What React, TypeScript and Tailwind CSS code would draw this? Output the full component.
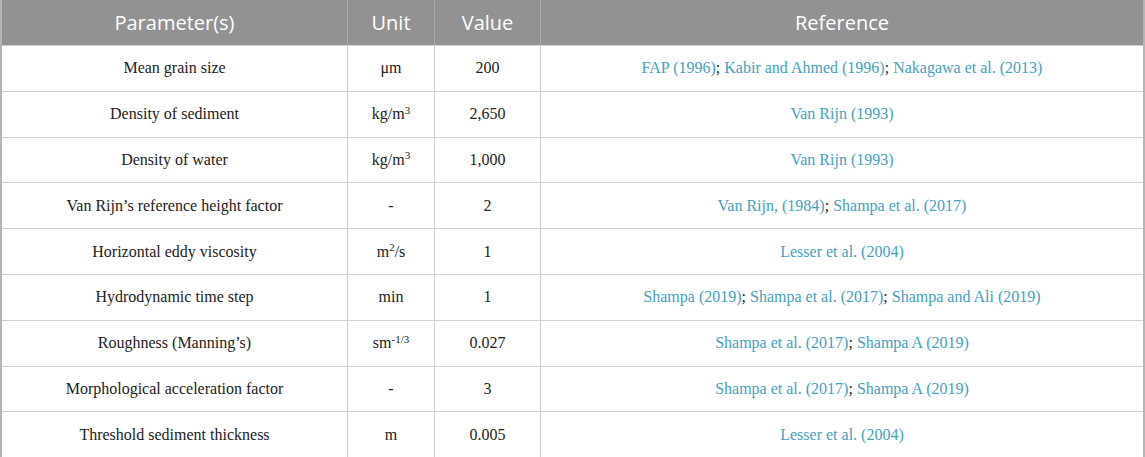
const rows: { param: string; unit: React.ReactNode; value: string; refs: string[] }[] = [
  { param: 'Mean grain size', unit: 'μm', value: '200', refs: ['FAP (1996)', 'Kabir and Ahmed (1996)', 'Nakagawa et al. (2013)'] },
  { param: 'Density of sediment', unit: <>kg/m<sup className="text-[11px]">3</sup></>, value: '2,650', refs: ['Van Rijn (1993)'] },
  { param: 'Density of water', unit: <>kg/m<sup className="text-[11px]">3</sup></>, value: '1,000', refs: ['Van Rijn (1993)'] },
  { param: 'Van Rijn’s reference height factor', unit: '-', value: '2', refs: ['Van Rijn, (1984)', 'Shampa et al. (2017)'] },
  { param: 'Horizontal eddy viscosity', unit: <>m<sup className="text-[11px]">2</sup>/s</>, value: '1', refs: ['Lesser et al. (2004)'] },
  { param: 'Hydrodynamic time step', unit: 'min', value: '1', refs: ['Shampa (2019)', 'Shampa et al. (2017)', 'Shampa and Ali (2019)'] },
  { param: 'Roughness (Manning’s)', unit: <>sm<sup className="text-[11px]">-1/3</sup></>, value: '0.027', refs: ['Shampa et al. (2017)', 'Shampa A (2019)'] },
  { param: 'Morphological acceleration factor', unit: '-', value: '3', refs: ['Shampa et al. (2017)', 'Shampa A (2019)'] },
  { param: 'Threshold sediment thickness', unit: 'm', value: '0.005', refs: ['Lesser et al. (2004)'] },
];

const headCell = 'flex items-center justify-center h-[45px] text-white text-[20px]';
const bodyCell = 'flex items-center justify-center h-[45.8px] border-t border-[#cfcfcf]';

export default function App() {
  return (
    <div className="w-[1145px] h-[457px] bg-white overflow-hidden">
      <div className="grid grid-cols-[346px_87px_106px_1fr] border-l-2 border-r-2 border-b border-[#b5b5b5] font-['Liberation_Serif',serif] text-[16px] text-[#222]">
        <div className={`${headCell} bg-[#929292] font-['Open_Sans',sans-serif] border-r border-[#a8a8a8]`}>Parameter(s)</div>
        <div className={`${headCell} bg-[#929292] font-['Open_Sans',sans-serif] border-r border-[#a8a8a8]`}>Unit</div>
        <div className={`${headCell} bg-[#929292] font-['Open_Sans',sans-serif] border-r border-[#a8a8a8]`}>Value</div>
        <div className={`${headCell} bg-[#929292] font-['Open_Sans',sans-serif]`}>Reference</div>
        {rows.map((r) => (
          <div key={r.param} className="contents">
            <div className={`${bodyCell} border-r`}>{r.param}</div>
            <div className={`${bodyCell} border-r`}>
              <span>{r.unit}</span>
            </div>
            <div className={`${bodyCell} border-r`}>{r.value}</div>
            <div className={bodyCell}>
              <span>
                {r.refs.map((ref, i) => (
                  <span key={ref}>
                    {i > 0 && '; '}
                    <span className="text-[#46a0c0]">{ref}</span>
                  </span>
                ))}
              </span>
            </div>
          </div>
        ))}
      </div>
    </div>
  );
}
